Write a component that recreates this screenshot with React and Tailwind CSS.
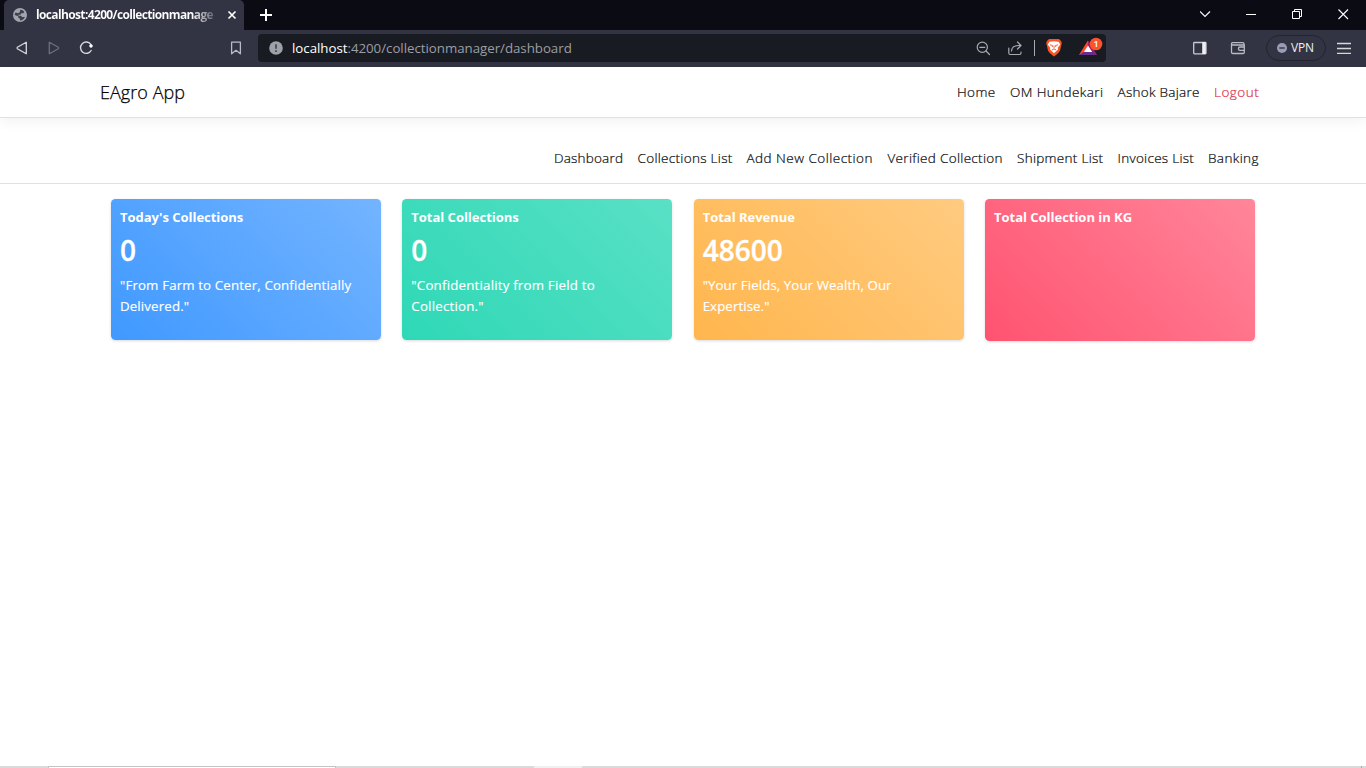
import React from "react";

const topLinks = [
  { label: "Home", cls: "w-[53px] tracking-[0.4px]" },
  { label: "OM Hundekari", cls: "w-[107.5px] tracking-[0.4px]" },
  { label: "Ashok Bajare", cls: "w-[96.5px] tracking-[0.28px]" },
  { label: "Logout", cls: "w-[47px] tracking-[0.5px] text-[#dc3545]" },
];

const subLinks = [
  { label: "Dashboard", cls: "w-[83.5px] tracking-[0.2px]" },
  { label: "Collections List", cls: "w-[109px] tracking-[0.3px]" },
  { label: "Add New Collection", cls: "w-[141px] tracking-[0.48px]" },
  { label: "Verified Collection", cls: "w-[129.5px] tracking-[0.32px]" },
  { label: "Shipment List", cls: "w-[100.5px] tracking-[0.3px]" },
  { label: "Invoices List", cls: "w-[90.5px] tracking-[0.28px]" },
  { label: "Banking", cls: "w-[53px] tracking-[0.38px]" },
];

const cards = [
  { title: "Today's Collections", value: "0", lines: ['"From Farm to Center, Confidentially', 'Delivered."'], bg: "h-[141px] bg-[linear-gradient(45deg,#4099ff,#73b4ff)]", track: "tracking-[0.13px]" },
  { title: "Total Collections", value: "0", lines: ['"Confidentiality from Field to', 'Collection."'], bg: "h-[141px] bg-[linear-gradient(45deg,#2ed8b6,#59e0c5)]", track: "tracking-[0.2px]" },
  { title: "Total Revenue", value: "48600", lines: ['"Your Fields, Your Wealth, Our', 'Expertise."'], bg: "h-[141px] bg-[linear-gradient(45deg,#ffb64d,#ffcb80)]", track: "tracking-[0.07px]" },
  { title: "Total Collection in KG", value: "", lines: [], bg: "h-[142px] bg-[linear-gradient(45deg,#ff5370,#ff869a)]", track: "" },
];

function TabStrip() {
  return (
    <div className="flex h-[30px] bg-[#0b0b14] pl-1 text-white">
      <div className="flex h-[30px] w-[240px] items-center rounded-t-[5px] bg-[#323443] pl-[9px]">
        <svg className="h-[14px] w-[14px] shrink-0" viewBox="0 0 14 14">
          <circle cx="7" cy="7" r="7" fill="#a3a5ae" />
          <path d="M7.200 1.800Q10 1.700 11.300 4L10.300 5.300H8.200L7.500 6.800H5.200L5.500 7.800H8L9 9H11.900Q10.500 12.300 7 12.400L6.800 10.600L5.300 9.800V8.300L1.700 6.900Q1.900 5.300 2.600 4.500L5 5.200L6.800 4.200Z" fill="#3d3f4c" />
        </svg>
        <div className="ml-[9px] w-[181px] whitespace-nowrap bg-[linear-gradient(90deg,#fff_86%,#ffffff20)] bg-clip-text text-[12px] font-bold leading-[16px] tracking-[-0.64px] text-transparent">
          localhost:4200/collectionmanage
        </div>
        <svg className="ml-[10px] h-[10px] w-[10px]" viewBox="0 0 10 10" stroke="#fff" strokeWidth="1.700"><path d="M1.500 1.500L8.500 8.500M8.500 1.500L1.500 8.500" /></svg>
      </div>
      <svg className="ml-[16px] mt-[9px] h-[12px] w-[12px]" viewBox="0 0 12 12" stroke="#fff" strokeWidth="2"><path d="M6 0V12M0 6H12" /></svg>
      <svg className="ml-auto h-[30px] w-[166px]" viewBox="0 0 166 30" fill="none" stroke="#fff">
        <path d="M0 11.500L5 16.500L10 11.500" strokeWidth="1.100" />
        <path d="M46 14.500H56" />
        <path d="M92.500 11.500H99.500V18.500H92.500ZM94.500 11.500V9.500H101.500V16.500H99.500" />
        <path d="M138.500 9.500L148 19M148 9.500L138.500 19" strokeWidth="1.100" />
      </svg>
    </div>
  );
}

function Toolbar() {
  return (
    <div className="flex h-[37px] items-center bg-[#323443] pb-[1px]">
      <svg className="h-[36px] w-[258px] shrink-0" viewBox="0 0 258 36" fill="none" stroke="#d8d9df" strokeWidth="1.300" strokeLinejoin="round">
        <path d="M26.300 12.200V23.800L17.300 18.700Q16.700 18 17.300 17.300Z" />
        <path d="M49.300 12.200V23.800L58.300 18.700Q58.900 18 58.300 17.300Z" stroke="#6d6f7c" />
        <path d="M90.800 14.300A5.700 5.700 0 1 0 91.200 20.500" strokeWidth="1.400" strokeLinecap="round" />
        <circle cx="91" cy="16" r="1.400" fill="#fff" stroke="#fff" strokeWidth="0.600" />
        <path d="M231.600 12.200H240.400V23.800L236 20.300L231.600 23.800Z" stroke="#b9bbc4" />
      </svg>
      <div className="flex h-[28px] w-[848px] items-center rounded-[4px] bg-[#191b22] pl-[11px]">
        <svg className="h-[14px] w-[14px]" viewBox="0 0 14 14"><circle cx="7" cy="7" r="6.800" fill="#9fa1a9" /><path d="M7 3.200V7.800M7 9.200V10.900" stroke="#44464f" strokeWidth="1.700" /></svg>
        <div className="ml-[9px] whitespace-nowrap text-[13.300px] leading-[18px] tracking-[-0.030px] text-[#9c9ea5]"><span className="text-white">localhost</span>:4200/collectionmanager/dashboard</div>
        <svg className="ml-auto h-[28px] w-[136px]" viewBox="0 0 136 28" fill="none">
          <g stroke="#a9aab1" strokeWidth="1.200" strokeLinecap="round">
            <circle cx="12.300" cy="13.300" r="5.100" /><path d="M16 17L19.500 20.500M9.800 13.300H14.800" />
            <path d="M38.800 14V19Q38.800 20.500 40.300 20.500H49.500Q51 20.500 51 19V18" /><path d="M41.500 17Q42 11.500 48.500 11.500H50.500M47.500 8L51 11.500L47.500 15" strokeLinejoin="round" />
          </g>
          <path d="M64.500 6V22" stroke="#a9aab1" />
          <path d="M79 5H89L91 7L91.800 9L90 16.500Q89 19 84 22.500Q79 19 78 16.500L76.200 9L77 7Z" fill="#fb5422" />
          <path d="M79.500 7.700L84 7.300L88.500 7.700L90.300 10.500L87.800 13.800L88 15.500L84 19.300L80 15.500L80.200 13.800L77.700 10.500Z" fill="#fff" />
          <path d="M79.800 10.800L82.500 11.500L82.200 13M88.200 10.800L85.500 11.500L85.800 13M84 11.500V14.500M81.800 16L84 15L86.200 16" stroke="#fb5422" strokeWidth="0.900" />
          <path d="M118 6.500L109 21H127Z" fill="#662d91" /><path d="M118 6.500L109 21L117.500 15.500Z" fill="#ff4724" /><path d="M118 6.500L127 21L118 14Z" fill="#9e1f63" /><path d="M118 11.500L113.800 18H122.200Z" fill="#fff" />
          <circle cx="126" cy="10" r="6.300" fill="#fb542b" />
          <text x="126" y="13.200" textAnchor="middle" fontSize="9" fontWeight="600" fill="#fff">1</text>
        </svg>
      </div>
      <svg className="ml-[86px] h-[36px] w-[56px]" viewBox="0 0 56 36" fill="none" stroke="#c9cad1" strokeWidth="1.300">
        <rect x="1.700" y="12.500" width="12.300" height="11.300" rx="0.700" /><path d="M12 12V24" stroke="#f0f0f3" strokeWidth="3.600" />
        <path d="M52 15.500V14Q52 12.700 50.700 12.700H40.500Q39.500 12.700 39.500 14V22.200Q39.500 23.500 40.800 23.500H51Q52.300 23.500 52.300 22.200V15H39.500M52.300 17H48Q46.500 17 46.500 18.500V19Q46.500 20.300 48 20.300H52.300" stroke="#b9bbc4" />
      </svg>
      <div className="ml-[18px] flex h-[26px] w-[60px] items-center rounded-full border border-[#21232e] pl-[10px]">
        <svg className="h-[10px] w-[10px]" viewBox="0 0 10 10"><circle cx="5" cy="5" r="5" fill="#9a9cb5" /><path d="M2.300 5H7.700" stroke="#323443" strokeWidth="1.400" /></svg>
        <span className="ml-[4px] text-[12px] font-medium tracking-[-0.200px] text-[#f0f0f4]">VPN</span>
      </div>
      <svg className="ml-[11px] h-[36px] w-[14px]" viewBox="0 0 14 36" stroke="#d6d7dd" strokeWidth="1.300"><path d="M0 13.500H14M0 18.500H14M0 23.300H14" /></svg>
    </div>
  );
}

function Links({ items }) {
  return (
    <nav className="flex text-[13.500px] font-light leading-[22px] text-[#0b0d10] [-webkit-text-stroke:0.22px_currentColor]">
      {items.map((item) => (
        <a key={item.label} className={`block shrink-0 whitespace-nowrap ${item.cls}`}>{item.label}</a>
      ))}
    </nav>
  );
}

export default function App() {
  return (
    <div className="flex h-screen w-[1366px] flex-col overflow-hidden bg-white font-['Open_Sans',sans-serif]">
      <TabStrip />
      <Toolbar />
      <header className="z-10 flex h-[51px] shrink-0 items-center justify-between border-b border-[#dee2e6] bg-white pl-[100px] pr-[105px] shadow-[0_4px_12px_rgba(0,0,0,0.05)]">
        <div className="text-[18px] font-light tracking-[0.050px] text-black [-webkit-text-stroke:0.25px_currentColor]">EAgro App</div>
        <Links items={topLinks} />
      </header>
      <div className="flex h-[66px] shrink-0 items-center justify-end border-b border-[#dee2e6] pr-[105px] pt-[15px]">
        <Links items={subLinks} />
      </div>
      <main className="flex flex-1 items-start gap-[21.330px] pl-[111px] pt-[15px]">
        {cards.map((card) => (
          <section key={card.title} className={`w-[270px] rounded-[4.500px] px-[9px] pt-[7px] text-white shadow-[0_1px_3px_rgba(4,26,55,0.16)] ${card.bg}`}>
            <h6 className="text-[13px] font-bold leading-[22px] tracking-[-0.020px]">{card.title}</h6>
            <h2 className="mt-[4px] h-[36px] text-[28px] font-semibold leading-[36px] [-webkit-text-stroke:0.3px_currentColor]">{card.value}</h2>
            <p className={`mt-[7px] whitespace-nowrap text-[13.300px] leading-[21px] [-webkit-text-stroke:0.15px_currentColor] ${card.track}`}>
              {card.lines.map((line) => <span key={line} className="block">{line}</span>)}
            </p>
          </section>
        ))}
      </main>
      <footer className="flex h-[2px] shrink-0 bg-[#dadada]">
        <div className="ml-[48px] h-[2px] w-[288px] border border-b-0 border-[#c4c4c4] bg-white" />
        <div className="ml-[198px] h-[2px] w-[48px] bg-[#f0f0f0]" />
        <div className="ml-auto mr-[4px] h-[2px] w-px bg-[#aaaaaa]" />
      </footer>
    </div>
  );
}
